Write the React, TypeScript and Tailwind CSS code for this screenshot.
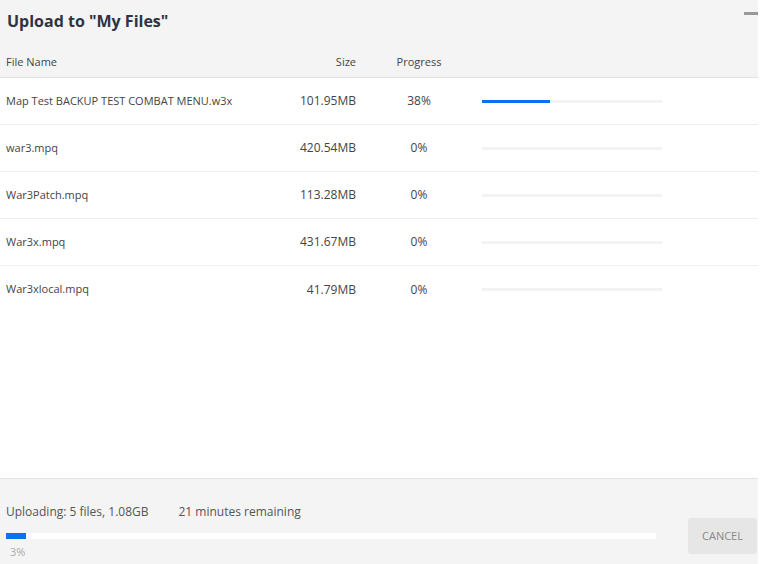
import React from 'react'

type UploadFile = { name: string; size: string; progress: number }

const files: UploadFile[] = [
  { name: 'Map Test BACKUP TEST COMBAT MENU.w3x', size: '101.95MB', progress: 38 },
  { name: 'war3.mpq', size: '420.54MB', progress: 0 },
  { name: 'War3Patch.mpq', size: '113.28MB', progress: 0 },
  { name: 'War3x.mpq', size: '431.67MB', progress: 0 },
  { name: 'War3xlocal.mpq', size: '41.79MB', progress: 0 },
]

const FileRow = ({ file, last }: { file: UploadFile; last: boolean }) => (
  <div
    className={`flex h-[47px] items-center pl-[6px] text-[12px] text-[#444] ${
      last ? '' : 'border-b border-[#efefef]'
    }`}
  >
    <div className="w-[270px] truncate text-[11px]">{file.name}</div>
    <div className="w-[80px] text-right">{file.size}</div>
    <div className="w-[126px] text-center">{file.progress}%</div>
    <div className="h-[3px] w-[180px] bg-[#f3f3f3]">
      <div className="h-full bg-[#0b72ef]" style={{ width: `${file.progress}%` }} />
    </div>
  </div>
)

export default function App() {
  return (
    <div className="flex h-[564px] w-[769px] bg-white font-['Open_Sans',sans-serif]">
      <div className="flex w-[758px] flex-col">
        <div className="relative h-[78px] border-b border-[#e2e2e2] bg-[#f4f4f4]">
          <h1 className="px-[7px] pt-[8px] text-[16px] leading-[26px] font-bold text-[#2e3443]">
            Upload to "My Files"
          </h1>
          <div className="absolute right-0 top-[12px] h-[3px] w-[14px] bg-[#999]" />
          <div className="mt-[19px] flex pl-[6px] text-[11px] leading-[18px] text-[#444]">
            <div className="w-[270px]">File Name</div>
            <div className="w-[80px] text-right">Size</div>
            <div className="w-[126px] text-center">Progress</div>
          </div>
        </div>
        <div>
          {files.map((f, i) => (
            <FileRow key={f.name} file={f} last={i === files.length - 1} />
          ))}
        </div>
        <div className="flex-1" />
        <div className="flex h-[86px] border-t border-[#e2e2e2] bg-[#f4f4f4]">
          <div className="flex-1 pl-[6px] pt-[24px]">
            <div className="flex text-[12px] leading-[18px] text-[#555]">
              <span>Uploading: 5 files, 1.08GB</span>
              <span className="ml-[30px]">21 minutes remaining</span>
            </div>
            <div className="mt-[12px] h-[6px] w-[650px] bg-white">
              <div className="h-full w-[20px] bg-[#0b72ef]" />
            </div>
            <div className="pl-[4px] pt-[6px] text-[11px] leading-[14px] text-[#aaa]">3%</div>
          </div>
          <div className="pt-[39px]">
            <button className="h-[36px] w-[69px] rounded-[3px] bg-[#e6e6e6] text-[11px] text-[#888]">
              CANCEL
            </button>
          </div>
          <div className="w-[1px]" />
        </div>
      </div>
    </div>
  )
}
